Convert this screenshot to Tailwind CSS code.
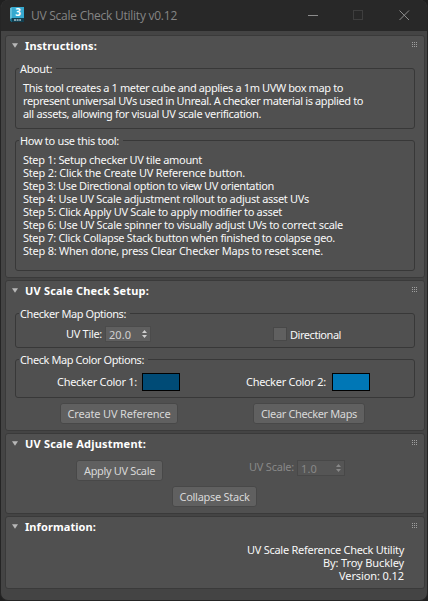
<!DOCTYPE html>
<html lang="en">
<head>
<meta charset="utf-8">
<title>UV Scale Check Utility v0.12</title>
<script src="https://cdn.jsdelivr.net/npm/@tailwindcss/browser@4"></script>
</head>
<body class="w-[428px] h-[601px] overflow-hidden bg-[#202020] font-['Noto_Sans','Open_Sans',sans-serif] text-[11px] leading-[13px] text-[#f8f8f8] whitespace-nowrap">
<svg class="hidden">
  <symbol id="grip" viewBox="0 0 6 5"><path fill="#a0a0a0" d="M0 0h1v1H0zM2 0h1v1H2zM4 0h1v1H4zM0 2h1v1H0zM2 2h1v1H2zM4 2h1v1H4zM0 4h1v1H0zM2 4h1v1H2zM4 4h1v1H4z"/></symbol>
  <symbol id="tri" viewBox="0 0 6 5"><path fill="#b8b8b8" d="M0 .3h6L3 4.7z"/></symbol>
  <symbol id="spin" viewBox="0 0 5 8"><path fill="currentColor" d="M2.5 0L5 3H0zM0 5h5L2.5 8z"/></symbol>
</svg>
<div class="w-[428px] h-[601px] rounded-[8px] overflow-hidden bg-[#444444] border-l border-r border-b border-[#252525] flex flex-col">
  <header class="h-[31px] shrink-0 bg-[#282828] flex items-center pl-[8px] pr-[17px]">
    <svg class="w-[16px] h-[17px] mt-[-3px]" viewBox="0 0 16 17">
      <path fill="#62bdd8" d="M1 2L3 1v12l-2 2z"/><path fill="#36a9cf" d="M3 1h12v11H3z"/><path fill="#176780" d="M1 13l2-1h12v4H2z"/><path fill="#123f50" d="M3 12h12v4H3z"/>
      <text x="9" y="9.8" text-anchor="middle" font-family="Open Sans" font-weight="700" font-size="10" fill="#fff">3</text>
      <path stroke="#a9c5ce" stroke-width="1.3" stroke-dasharray="2 .6" d="M5 14h7"/>
    </svg>
    <h1 class="ml-[6px] text-[12px] leading-[16px] text-[#858585] font-['Open_Sans','Noto_Sans',sans-serif]"><span data-w="146">UV Scale Check Utility v0.12</span></h1>
    <svg class="ml-auto w-[102px] h-[11px] mt-[-1px]" viewBox="0 0 102 11" fill="none">
      <path stroke="#8c8c8c" d="M0 5.5h10"/><rect x="45.5" y=".5" width="9" height="9" stroke="#3e3e3e"/><path stroke="#8c8c8c" d="M91.5 .5l9.5 9.5M101 .5L91.5 10"/>
    </svg>
  </header>
  <main class="pt-[4px] pl-[4px] pr-[2px] flex flex-col gap-[2px]">
    <section class="h-[243px] border border-[#3a3a3a] rounded-[3px] bg-[#505050] pl-[9px] pr-[9px]">
      <div class="flex items-center h-[21px] mb-[5px]">
        <svg class="w-[6px] h-[5px] ml-[-3px] mt-[-3px]"><use href="#tri"/></svg>
        <h2 class="ml-[7px] mt-[-2px] font-bold text-white"><span data-w="72">Instructions:</span></h2>
        <svg class="w-[6px] h-[5px] ml-auto mr-[-3px] mt-[-4px]"><use href="#grip"/></svg>
      </div>
      <fieldset class="h-[67px] border border-[#383838] rounded-[3px] pl-[7px] pt-[6px]">
        <legend class="ml-[-4px] pl-[1px] pr-[4px]"><span data-w="32">About:</span></legend>
        <p><span data-w="320">This tool creates a 1 meter cube and applies a 1m UVW box map to</span></p>
        <p><span data-w="340">represent universal UVs used in Unreal. A checker material is applied to</span></p>
        <p><span data-w="238">all assets, allowing for visual UV scale verification.</span></p>
      </fieldset>
      <fieldset class="mt-[5px] h-[137px] border border-[#383838] rounded-[3px] pl-[7px] pt-[6px]">
        <legend class="ml-[-4px] pl-[1px] pr-[4px]"><span data-w="99">How to use this tool:</span></legend>
        <p><span data-w="179">Step 1: Setup checker UV tile amount</span></p>
        <p><span data-w="222">Step 2: Click the Create UV Reference button.</span></p>
        <p><span data-w="251">Step 3: Use Directional option to view UV orientation</span></p>
        <p><span data-w="286">Step 4: Use UV Scale adjustment rollout to adjust asset UVs</span></p>
        <p><span data-w="259">Step 5: Click Apply UV Scale to apply modifier to asset</span></p>
        <p><span data-w="320">Step 6: Use UV Scale spinner to visually adjust UVs to correct scale</span></p>
        <p><span data-w="312">Step 7: Click Collapse Stack button when finished to colapse geo.</span></p>
        <p><span data-w="300">Step 8: When done, press Clear Checker Maps to reset scene.</span></p>
      </fieldset>
    </section>
    <section class="h-[151px] border border-[#3a3a3a] rounded-[3px] bg-[#505050] pl-[9px] pr-[9px]">
      <div class="flex items-center h-[21px] mb-[5px]">
        <svg class="w-[6px] h-[5px] ml-[-3px] mt-[-3px]"><use href="#tri"/></svg>
        <h2 class="ml-[7px] mt-[-2px] font-bold text-white"><span data-w="124">UV Scale Check Setup:</span></h2>
        <svg class="w-[6px] h-[5px] ml-auto mr-[-3px] mt-[-4px]"><use href="#grip"/></svg>
      </div>
      <fieldset class="h-[41px] border border-[#383838] rounded-[3px]">
        <legend class="ml-[3px] pl-[1px] pr-[4px]"><span data-w="106">Checker Map Options:</span></legend>
        <div class="flex items-center pl-[50px] pt-[6px]">
          <span class="mt-[-2px]" data-w="36">UV Tile:</span>
          <div class="ml-[3px] w-[46px] h-[16px] bg-[#5f5f5f] border border-[#4b4b4b] flex items-center pl-[3px] pr-[3px] text-[#d0d0d0]"><span data-w="22">20.0</span><svg class="ml-auto w-[5px] h-[8px]"><use href="#spin"/></svg></div>
          <div class="ml-[122px] mt-[-1px] w-[14px] h-[14px] bg-[#606060] border border-[#484848]"></div>
          <span class="ml-[3px]" data-w="51">Directional</span>
        </div>
      </fieldset>
      <fieldset class="mt-[5px] h-[45px] border border-[#383838] rounded-[3px]">
        <legend class="ml-[3px] pl-[1px] pr-[4px]"><span data-w="124">Check Map Color Options:</span></legend>
        <div class="flex items-center pl-[41px] pt-[7px]">
          <span class="mt-[-1px]" data-w="80">Checker Color 1:</span>
          <div class="ml-[5px] w-[38px] h-[18px] bg-[#004b76] border border-black"></div>
          <span class="ml-[66px] mt-[-1px]" data-w="80">Checker Color 2:</span>
          <div class="ml-[6px] w-[38px] h-[18px] bg-[#0077b6] border border-black"></div>
        </div>
      </fieldset>
      <div class="flex mt-[5px] pl-[45px] text-[#d8d8d8]">
        <button class="w-[118px] h-[21px] rounded-[3px] border border-[#484848] bg-[#606060]"><span data-w="103">Create UV Reference</span></button>
        <button class="ml-[75px] w-[112px] h-[21px] rounded-[3px] border border-[#484848] bg-[#606060]"><span data-w="96">Clear Checker Maps</span></button>
      </div>
    </section>
    <section class="h-[81px] border border-[#3a3a3a] rounded-[3px] bg-[#505050] pl-[9px] pr-[9px]">
      <div class="flex items-center h-[21px] mb-[5px]">
        <svg class="w-[6px] h-[5px] ml-[-3px] mt-[-3px]"><use href="#tri"/></svg>
        <h2 class="ml-[7px] mt-[-2px] font-bold text-white"><span data-w="121">UV Scale Adjustment:</span></h2>
        <svg class="w-[6px] h-[5px] ml-auto mr-[-3px] mt-[-4px]"><use href="#grip"/></svg>
      </div>
      <div class="flex items-start pl-[61px]">
        <button class="w-[87px] h-[21px] rounded-[3px] border border-[#484848] bg-[#606060] text-[#d8d8d8]"><span data-w="71">Apply UV Scale</span></button>
        <span class="ml-[86px] text-[#888888]" data-w="45">UV Scale:</span>
        <div class="ml-[3px] w-[48px] h-[16px] bg-[#555555] border border-[#484848] flex items-center pl-[3px] pr-[3px] text-[#888888]"><span data-w="16">1.0</span><svg class="ml-auto w-[5px] h-[8px]"><use href="#spin"/></svg></div>
      </div>
      <button class="block ml-[157px] mt-[5px] w-[85px] h-[21px] rounded-[3px] border border-[#484848] bg-[#606060] text-[#d8d8d8]"><span data-w="70">Collapse Stack</span></button>
    </section>
    <section class="h-[73px] border border-[#3a3a3a] rounded-[3px] bg-[#505050] pl-[9px] pr-[9px]">
      <div class="flex items-center h-[21px] mb-[5px]">
        <svg class="w-[6px] h-[5px] ml-[-3px] mt-[-3px]"><use href="#tri"/></svg>
        <h2 class="ml-[7px] mt-[-2px] font-bold text-white"><span data-w="71">Information:</span></h2>
        <svg class="w-[6px] h-[5px] ml-auto mr-[-3px] mt-[-4px]"><use href="#grip"/></svg>
      </div>
      <div class="text-right pr-[11px]">
        <p><span data-w="157">UV Scale Reference Check Utility</span></p>
        <p><span data-w="81">By: Troy Buckley</span></p>
        <p><span data-w="65">Version: 0.12</span></p>
      </div>
    </section>
  </main>
</div>
<script>
  // Track each label so its advance equals the width given in data-w.
  function fit() {
    document.querySelectorAll('[data-w]').forEach(function (el) {
      el.style.letterSpacing = '0px';
      var w = el.getBoundingClientRect().width;
      el.style.letterSpacing = ((el.dataset.w - w) / el.textContent.length) + 'px';
    });
  }
  window.addEventListener('load', fit);
  new ResizeObserver(fit).observe(document.body);
</script>
</body>
</html>
